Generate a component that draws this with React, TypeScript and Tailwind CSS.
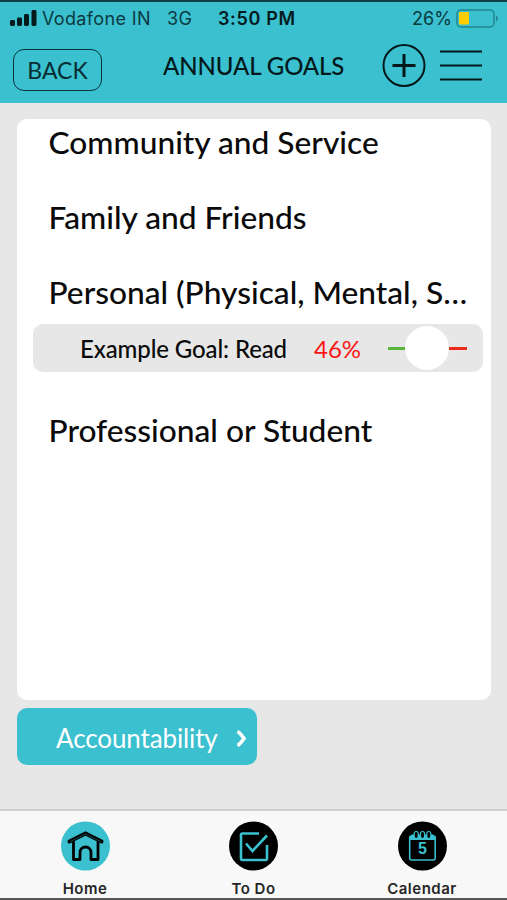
import React from 'react';

function SignalIcon() {
  return (
    <svg width="27" height="17" viewBox="0 0 27 17" fill="#041a1d">
      <rect x="0" y="10" width="5" height="6" rx="1.4" />
      <rect x="7" y="7.5" width="5" height="8.5" rx="1.4" />
      <rect x="14" y="4" width="5" height="12" rx="1.4" />
      <rect x="21.5" y="0" width="5" height="16" rx="1.4" />
    </svg>
  );
}

function BatteryIcon() {
  return (
    <svg width="43" height="19" viewBox="0 0 43 19" fill="none">
      <rect x="1" y="1" width="37" height="17" rx="4" stroke="#238590" strokeWidth="1.5" />
      <rect x="3" y="3" width="10" height="12.5" rx="1" fill="#ffcc00" />
      <path d="M40 6.5c2.6 1 2.6 5 0 6z" fill="#238590" />
    </svg>
  );
}

function StatusBar() {
  return (
    <div className="flex h-8 items-center font-['Inter',sans-serif] text-[18px] text-[#0b3a40]">
      <div className="w-[42px] pl-2.5">
        <SignalIcon />
      </div>
      <span className="w-[125px] whitespace-nowrap tracking-[0.35px]">Vodafone IN</span>
      <span className="w-[51px] tracking-[0.5px]">3G</span>
      <span className="w-[194px] font-semibold tracking-[0.65px] text-[#041a1d]">3:50 PM</span>
      <span className="w-[44px]">26%</span>
      <BatteryIcon />
    </div>
  );
}

function Header() {
  return (
    <div className="flex h-[69px] pt-0.5 pl-[13px]">
      <button className="mt-[13px] h-[42px] w-[89px] rounded-[11px] border-[1.5px] border-[#0a343a] text-[23px] leading-[40px] text-[#072c31]">
        BACK
      </button>
      <h1 className="ml-[61px] w-[219px] text-[24px] leading-[60px] font-medium tracking-[-0.1px] whitespace-nowrap text-[#03181b]">
        ANNUAL GOALS
      </h1>
      <svg className="mt-2" width="44" height="44" viewBox="0 0 44 44" fill="none" stroke="#03181b">
        <circle cx="22" cy="21.5" r="20.5" strokeWidth="2" />
        <path d="M22 10v23M10.500 21.500h23" strokeWidth="3" />
      </svg>
      <svg className="mt-3 ml-3.5" width="42" height="36" viewBox="0 0 42 36" stroke="#03181b" strokeWidth="2">
        <path d="M0 3.500h42M0 17.500h42M0 31.500h42" />
      </svg>
    </div>
  );
}

function CategoryTitle({ children }: { children: React.ReactNode }) {
  return (
    <h2 className="ml-[31.5px] h-12 text-[31.700px] leading-[47px] font-medium whitespace-nowrap">{children}</h2>
  );
}

function GoalRow() {
  return (
    <div className="mt-[7px] ml-4 flex h-12 w-[450px] items-center rounded-[10px] bg-[#e7e7e7] pl-[47px]">
      <span className="w-[234px] pt-0.5 text-[24px] font-medium tracking-[-0.12px] whitespace-nowrap">
        Example Goal: Read
      </span>
      <span className="w-[74px] pt-0.5 text-[24px] text-[#fb1616]">46%</span>
      <div className="flex items-center">
        <div className="h-[3px] w-[17px] bg-[#59b53c]" />
        <div className="h-11 w-11 rounded-full bg-white" />
        <div className="h-[3px] w-[18px] bg-[#ee2a1c]" />
      </div>
    </div>
  );
}

function HomeIcon() {
  return (
    <svg width="49" height="50" viewBox="0 0 49 50" fill="none" stroke="#000" strokeLinecap="round">
      <circle cx="24.500" cy="25" r="24.500" fill="#3ac0cf" stroke="none" />
      <path d="M8.500 20.500L24.500 12.500l16 8" strokeWidth="4" />
      <path d="M9.500 20.500L24.500 13l15 7.500" stroke="#1c6670" strokeWidth="0.700" />
      <path d="M12.500 21.500V38.500h6.500v-7a5.500 5.500 0 0 1 11 0v7h7V21.500" strokeWidth="2.800" strokeLinejoin="round" />
    </svg>
  );
}

function TodoIcon() {
  return (
    <svg width="49" height="50" viewBox="0 0 49 50" fill="none" stroke="#3ac0cf" strokeWidth="2.600">
      <circle cx="24.500" cy="25" r="24.500" fill="#000" stroke="none" />
      <path d="M30 12.500H13.500a1.500 1.500 0 0 0-1.500 1.500v23.500a1.500 1.500 0 0 0 1.500 1.500H36.500a1.500 1.500 0 0 0 1.500-1.500V24" />
      <path d="M17 22.500l6.500 7.500L38 14.500" />
    </svg>
  );
}

function CalendarIcon() {
  return (
    <svg width="49" height="50" viewBox="0 0 49 50" fill="none" stroke="#3ac0cf">
      <circle cx="24.500" cy="25" r="24.500" fill="#000" stroke="none" />
      <rect x="11.700" y="15" width="25.500" height="24" rx="2" strokeWidth="1.600" />
      <path d="M11 19v-3l3-2.500h21l3 2.500v3z" fill="#3ac0cf" stroke="none" />
      <g fill="#000" strokeWidth="1.200">
        <rect x="16.200" y="10.500" width="4" height="7" rx="2" />
        <rect x="22.500" y="10.500" width="4" height="7" rx="2" />
        <rect x="28.800" y="10.500" width="4" height="7" rx="2" />
      </g>
      <text x="24.500" y="33" textAnchor="middle" className="fill-[#3ac0cf] stroke-none font-['Liberation_Sans_Narrow','Liberation_Sans',sans-serif] text-[16px] font-bold">
        5
      </text>
    </svg>
  );
}

const tabs = [
  { label: 'Home', icon: <HomeIcon /> },
  { label: 'To Do', icon: <TodoIcon /> },
  { label: 'Calendar', icon: <CalendarIcon /> },
];

function TabBar() {
  return (
    <nav className="grid h-[89px] grid-cols-[170px_167px_170px] border-t-2 border-[#cfcfcf] bg-[#f8f8f8] font-['Inter',sans-serif]">
      {tabs.map((tab) => (
        <div key={tab.label} className="flex flex-col items-center pt-2.5">
          {tab.icon}
          <span className="mt-2 text-[15px] leading-5 font-semibold tracking-[0.5px] text-[#262626]">{tab.label}</span>
        </div>
      ))}
    </nav>
  );
}

export default function App() {
  return (
    <div className="flex h-[900px] w-[507px] flex-col overflow-hidden border-t-2 border-b-2 border-t-[#123f45] border-b-[#555555] bg-[#e7e7e7] font-['Lato',sans-serif] text-[#0a0a0a]">
      <header className="bg-[#3ac0cf]">
        <StatusBar />
        <Header />
      </header>
      <main className="flex-1 pt-4 pl-[17px]">
        <div className="flex h-[581px] w-[474px] flex-col rounded-[10px] bg-white">
          <CategoryTitle>Community and Service</CategoryTitle>
          <div className="mt-[27px]">
            <CategoryTitle>Family and Friends</CategoryTitle>
          </div>
          <div className="mt-[27px]">
            <CategoryTitle>Personal (Physical, Mental, S…</CategoryTitle>
            <GoalRow />
          </div>
          <div className="mt-[35px]">
            <CategoryTitle>Professional or Student</CategoryTitle>
          </div>
        </div>
        <button className="mt-2 flex h-[57px] w-60 items-center rounded-[10px] bg-[#3ac0cf] pl-[39px] text-white">
          <span className="w-[180px] pt-[3px] text-left text-[26px] leading-[54px] tracking-[-0.12px]">Accountability</span>
          <svg className="mt-1" width="11" height="17" viewBox="0 0 11 17" fill="none" stroke="#fff" strokeWidth="3.600">
            <path d="M1.500 1.500C4.500 3 6 6 8 8.500 6 11 4.500 14 1.500 15.500" />
          </svg>
        </button>
      </main>
      <TabBar />
    </div>
  );
}
